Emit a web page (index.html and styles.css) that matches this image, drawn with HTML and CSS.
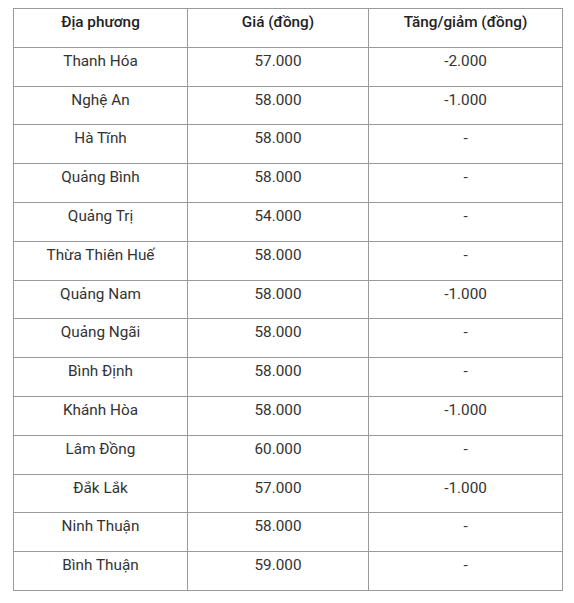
FILE: index.html
```html
<!DOCTYPE html>
<html lang="vi">
<head>
<meta charset="utf-8">
<link rel="stylesheet" href="styles.css">
</head>
<body>
<table class="price-table">
  <colgroup>
    <col class="c1"><col class="c2"><col class="c3">
  </colgroup>
  <thead>
    <tr><th>Địa phương</th><th>Giá (đồng)</th><th>Tăng/giảm (đồng)</th></tr>
  </thead>
  <tbody>
    <tr><td>Thanh Hóa</td><td>57.000</td><td>-2.000</td></tr>
    <tr><td>Nghệ An</td><td>58.000</td><td>-1.000</td></tr>
    <tr><td>Hà Tĩnh</td><td>58.000</td><td>-</td></tr>
    <tr><td>Quảng Bình</td><td>58.000</td><td>-</td></tr>
    <tr><td>Quảng Trị</td><td>54.000</td><td>-</td></tr>
    <tr><td>Thừa Thiên Huế</td><td>58.000</td><td>-</td></tr>
    <tr><td>Quảng Nam</td><td>58.000</td><td>-1.000</td></tr>
    <tr><td>Quảng Ngãi</td><td>58.000</td><td>-</td></tr>
    <tr><td>Bình Định</td><td>58.000</td><td>-</td></tr>
    <tr><td>Khánh Hòa</td><td>58.000</td><td>-1.000</td></tr>
    <tr><td>Lâm Đồng</td><td>60.000</td><td>-</td></tr>
    <tr><td>Đắk Lắk</td><td>57.000</td><td>-1.000</td></tr>
    <tr><td>Ninh Thuận</td><td>58.000</td><td>-</td></tr>
    <tr><td>Bình Thuận</td><td>59.000</td><td>-</td></tr>
  </tbody>
</table>
</body>
</html>
```
FILE: styles.css
```css
html, body {
  margin: 0;
  background: #fff;
}
body {
  padding: 8px 12px 8px 13px;
  font-family: Roboto, "Liberation Sans", Arial, sans-serif;
  font-size: 15.3px;
  color: #333;
}
.price-table {
  border-collapse: collapse;
  table-layout: fixed;
  width: 549px;
}
.c1 { width: 174px; }
.c2 { width: 181px; }
.c3 { width: 194px; }
.price-table th,
.price-table td {
  border: 1px solid #9a9a9a;
  text-align: center;
  vertical-align: top;
  line-height: 20px;
  padding: 3px 6px 14.8px;
}
.price-table th {
  font-weight: 500;
  color: #222;
}
```
